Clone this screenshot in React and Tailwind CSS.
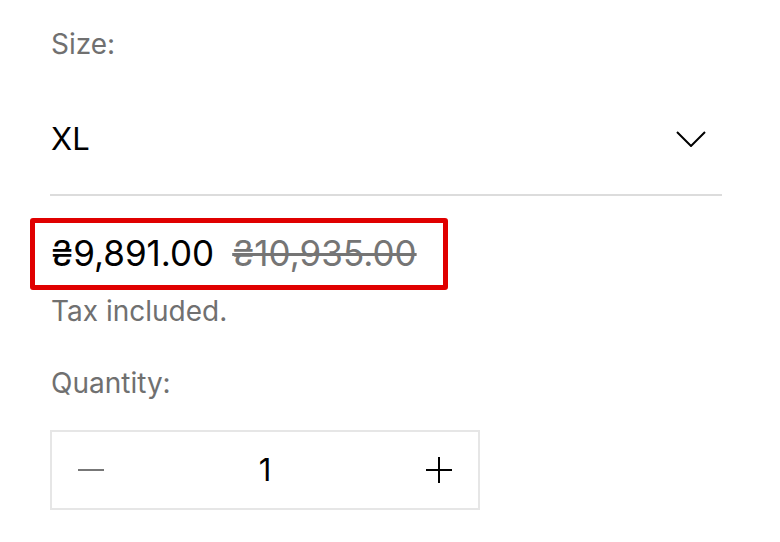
export default function App() {
  return (
    <div className="w-[780px] h-[542px] bg-white font-['Inter',sans-serif] pl-[50px] pr-[58px] pt-[24px]">
      <div className="text-[28px] leading-[40px] text-[#707070] pl-[1px]">Size:</div>
      <div className="h-[112px] mt-[20px] border-b-2 border-[#dcdcdc] flex items-center justify-between pl-[1px] pr-[16px]">
        <span className="text-[31px] text-black">XL</span>
        <svg width="30" height="16" viewBox="0 0 30 16" fill="none">
          <polyline points="1,1 15,15 29,1" stroke="#000" strokeWidth="2" />
        </svg>
      </div>
      <div className="mt-[22px] ml-[-20px] w-[418px] h-[72px] border-[5px] border-[#e00000] rounded-[3px] flex items-center pl-[16px] gap-[18px]">
        <span className="text-[35px] leading-[40px] text-black pb-[2px]">₴9,891.00</span>
        <span className="text-[35px] leading-[40px] text-[#757575] line-through pb-[2px]">₴10,935.00</span>
      </div>
      <div className="text-[28px] leading-[40px] text-[#707070] mt-[1px] pl-[1px]">Tax included.</div>
      <div className="text-[28px] leading-[40px] text-[#707070] mt-[32px] pl-[1px]">Quantity:</div>
      <div className="mt-[27px] w-[430px] h-[80px] border-2 border-[#e6e6e6] flex items-center justify-between px-[25px]">
        <svg width="28" height="4" viewBox="0 0 28 4"><line x1="1" y1="2" x2="27" y2="2" stroke="#777" strokeWidth="2" /></svg>
        <span className="text-[31px] text-black">1</span>
        <svg width="28" height="28" viewBox="0 0 28 28"><line x1="1" y1="14" x2="27" y2="14" stroke="#000" strokeWidth="2" /><line x1="14" y1="1" x2="14" y2="27" stroke="#000" strokeWidth="2" /></svg>
      </div>
    </div>
  );
}
